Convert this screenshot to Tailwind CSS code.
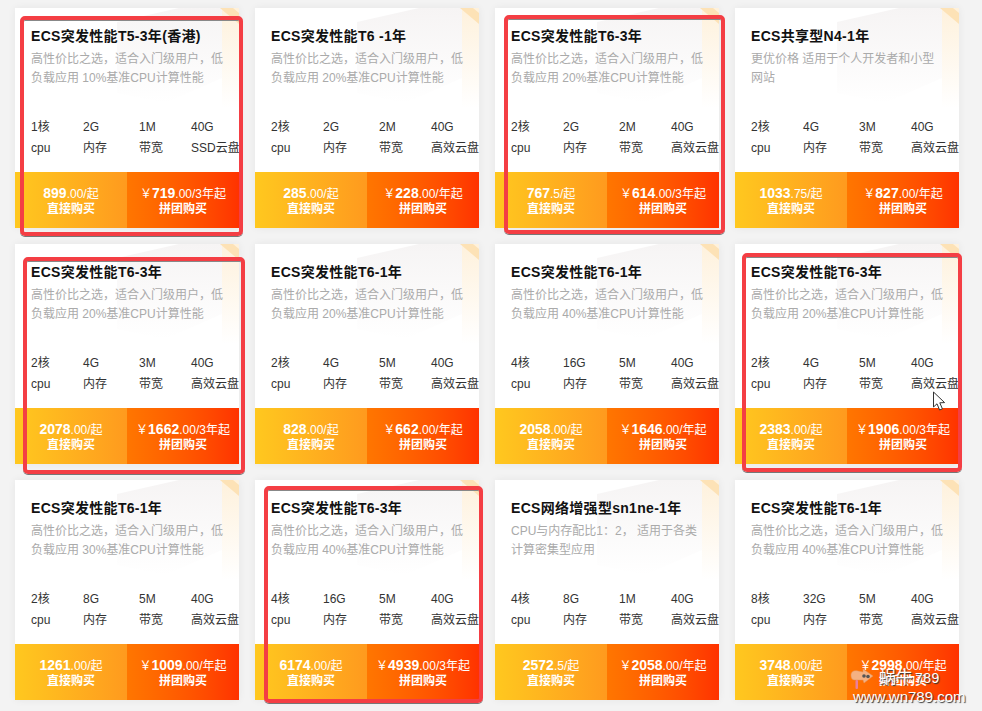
<!DOCTYPE html>
<html lang="zh-CN">

<head>
  <meta charset="UTF-8" />
  <meta name="viewport" content="width=device-width, initial-scale=1" />
  <title>ECS</title>
  <script src="https://cdn.jsdelivr.net/npm/@tailwindcss/browser@4"></script>
</head>

<body class="bg-[#f3f3f3] h-[711px] overflow-hidden relative font-[family-name:'Liberation_Sans','Noto_Sans_CJK_SC',sans-serif]">
  <svg class="absolute" width="0" height="0">
    <defs>
      <linearGradient id="stripe" x1="0" y1="0" x2="0" y2="1">
        <stop offset="0" stop-color="#fef1dc" />
        <stop offset="1" stop-color="#ffffff" />
      </linearGradient>
      <linearGradient id="slab" x1="0" y1="0" x2="0" y2="1">
        <stop offset="0" stop-color="#f6f4f4" />
        <stop offset="1" stop-color="#ffffff" />
      </linearGradient>
      <g id="deco">
        <polygon points="102,14 164,0 207,0 207,70 150,95 102,85" fill="url(#slab)" />
        <rect x="207" y="0" width="17" height="100" fill="url(#stripe)" />
        <polygon points="205,0 218,0 224,5 224,16" fill="#fde2b6" />
      </g>
    </defs>
  </svg>

  <div class="grid grid-cols-[repeat(4,224px)] auto-rows-[220px] gap-4 pl-[15px] pt-2">

    <!-- row 1 -->
    <div class="relative bg-white shadow-[0_0_8px_rgba(0,0,0,0.06)] flex flex-col">
      <svg class="absolute top-0 left-0" width="224" height="110"><use href="#deco" /></svg>
      <div class="relative px-4 pt-[18px]">
        <h3 class="text-sm font-bold leading-5 tracking-[0.3px] text-[#111]">ECS突发性能T5-3年(香港)</h3>
        <p class="mt-1 h-[38px] text-xs leading-[19px] text-[#aaa]">高性价比之选，适合入门级用户，低负载应用 10%基准CPU计算性能</p>
      </div>
      <div class="relative grid grid-cols-[52px_56px_52px_48px] pl-4 mt-[29px] text-xs leading-[21px] text-[#333] whitespace-nowrap">
        <div>1核<br />cpu</div><div>2G<br />内存</div><div>1M<br />带宽</div><div>40G<br />SSD云盘</div>
      </div>
      <div class="relative mt-auto h-14 grid grid-cols-2 text-xs leading-[15px] text-white text-center">
        <div class="flex flex-col justify-center pt-0.5 bg-linear-to-r from-[#ffc81f] to-[#ff9a1e]"><div><b class="text-[14px]">899</b>.00/起</div><div class="font-bold">直接购买</div></div>
        <div class="flex flex-col justify-center pt-0.5 bg-linear-to-r from-[#ff7600] to-[#ff3200]"><div>￥<b class="text-[14px]">719</b>.00/3年起</div><div class="font-bold">拼团购买</div></div>
      </div>
      <div class="absolute left-[5px] top-2 w-[223px] h-[220px] border-4 border-[#f43e44] rounded-[5px] shadow-[0_1px_0_#777,inset_0_1px_0_#888]"></div>
    </div>

    <div class="relative bg-white shadow-[0_0_8px_rgba(0,0,0,0.06)] flex flex-col">
      <svg class="absolute top-0 left-0" width="224" height="110"><use href="#deco" /></svg>
      <div class="relative px-4 pt-[18px]">
        <h3 class="text-sm font-bold leading-5 tracking-[0.3px] text-[#111]">ECS突发性能T6 -1年</h3>
        <p class="mt-1 h-[38px] text-xs leading-[19px] text-[#aaa]">高性价比之选，适合入门级用户，低负载应用 20%基准CPU计算性能</p>
      </div>
      <div class="relative grid grid-cols-[52px_56px_52px_48px] pl-4 mt-[29px] text-xs leading-[21px] text-[#333] whitespace-nowrap">
        <div>2核<br />cpu</div><div>2G<br />内存</div><div>2M<br />带宽</div><div>40G<br />高效云盘</div>
      </div>
      <div class="relative mt-auto h-14 grid grid-cols-2 text-xs leading-[15px] text-white text-center">
        <div class="flex flex-col justify-center pt-0.5 bg-linear-to-r from-[#ffc81f] to-[#ff9a1e]"><div><b class="text-[14px]">285</b>.00/起</div><div class="font-bold">直接购买</div></div>
        <div class="flex flex-col justify-center pt-0.5 bg-linear-to-r from-[#ff7600] to-[#ff3200]"><div>￥<b class="text-[14px]">228</b>.00/年起</div><div class="font-bold">拼团购买</div></div>
      </div>
    </div>

    <div class="relative bg-white shadow-[0_0_8px_rgba(0,0,0,0.06)] flex flex-col">
      <svg class="absolute top-0 left-0" width="224" height="110"><use href="#deco" /></svg>
      <div class="relative px-4 pt-[18px]">
        <h3 class="text-sm font-bold leading-5 tracking-[0.3px] text-[#111]">ECS突发性能T6-3年</h3>
        <p class="mt-1 h-[38px] text-xs leading-[19px] text-[#aaa]">高性价比之选，适合入门级用户，低负载应用 20%基准CPU计算性能</p>
      </div>
      <div class="relative grid grid-cols-[52px_56px_52px_48px] pl-4 mt-[29px] text-xs leading-[21px] text-[#333] whitespace-nowrap">
        <div>2核<br />cpu</div><div>2G<br />内存</div><div>2M<br />带宽</div><div>40G<br />高效云盘</div>
      </div>
      <div class="relative mt-auto h-14 grid grid-cols-2 text-xs leading-[15px] text-white text-center">
        <div class="flex flex-col justify-center pt-0.5 bg-linear-to-r from-[#ffc81f] to-[#ff9a1e]"><div><b class="text-[14px]">767</b>.5/起</div><div class="font-bold">直接购买</div></div>
        <div class="flex flex-col justify-center pt-0.5 bg-linear-to-r from-[#ff7600] to-[#ff3200]"><div>￥<b class="text-[14px]">614</b>.00/3年起</div><div class="font-bold">拼团购买</div></div>
      </div>
      <div class="absolute left-[9px] top-[7px] w-[221px] h-[219px] border-4 border-[#f43e44] rounded-[5px] shadow-[0_1px_0_#777,inset_0_1px_0_#888]"></div>
    </div>

    <div class="relative bg-white shadow-[0_0_8px_rgba(0,0,0,0.06)] flex flex-col">
      <svg class="absolute top-0 left-0" width="224" height="110"><use href="#deco" /></svg>
      <div class="relative px-4 pt-[18px]">
        <h3 class="text-sm font-bold leading-5 tracking-[0.3px] text-[#111]">ECS共享型N4-1年</h3>
        <p class="mt-1 h-[38px] text-xs leading-[19px] text-[#aaa]">更优价格 适用于个人开发者和小型网站</p>
      </div>
      <div class="relative grid grid-cols-[52px_56px_52px_48px] pl-4 mt-[29px] text-xs leading-[21px] text-[#333] whitespace-nowrap">
        <div>2核<br />cpu</div><div>4G<br />内存</div><div>3M<br />带宽</div><div>40G<br />高效云盘</div>
      </div>
      <div class="relative mt-auto h-14 grid grid-cols-2 text-xs leading-[15px] text-white text-center">
        <div class="flex flex-col justify-center pt-0.5 bg-linear-to-r from-[#ffc81f] to-[#ff9a1e]"><div><b class="text-[14px]">1033</b>.75/起</div><div class="font-bold">直接购买</div></div>
        <div class="flex flex-col justify-center pt-0.5 bg-linear-to-r from-[#ff7600] to-[#ff3200]"><div>￥<b class="text-[14px]">827</b>.00/年起</div><div class="font-bold">拼团购买</div></div>
      </div>
    </div>

    <!-- row 2 -->
    <div class="relative bg-white shadow-[0_0_8px_rgba(0,0,0,0.06)] flex flex-col">
      <svg class="absolute top-0 left-0" width="224" height="110"><use href="#deco" /></svg>
      <div class="relative px-4 pt-[18px]">
        <h3 class="text-sm font-bold leading-5 tracking-[0.3px] text-[#111]">ECS突发性能T6-3年</h3>
        <p class="mt-1 h-[38px] text-xs leading-[19px] text-[#aaa]">高性价比之选，适合入门级用户，低负载应用 20%基准CPU计算性能</p>
      </div>
      <div class="relative grid grid-cols-[52px_56px_52px_48px] pl-4 mt-[29px] text-xs leading-[21px] text-[#333] whitespace-nowrap">
        <div>2核<br />cpu</div><div>4G<br />内存</div><div>3M<br />带宽</div><div>40G<br />高效云盘</div>
      </div>
      <div class="relative mt-auto h-14 grid grid-cols-2 text-xs leading-[15px] text-white text-center">
        <div class="flex flex-col justify-center pt-0.5 bg-linear-to-r from-[#ffc81f] to-[#ff9a1e]"><div><b class="text-[14px]">2078</b>.00/起</div><div class="font-bold">直接购买</div></div>
        <div class="flex flex-col justify-center pt-0.5 bg-linear-to-r from-[#ff7600] to-[#ff3200]"><div>￥<b class="text-[14px]">1662</b>.00/3年起</div><div class="font-bold">拼团购买</div></div>
      </div>
      <div class="absolute left-2 top-[13px] w-[222px] h-[217px] border-4 border-[#f43e44] rounded-[5px] shadow-[0_1px_0_#777,inset_0_1px_0_#888]"></div>
    </div>

    <div class="relative bg-white shadow-[0_0_8px_rgba(0,0,0,0.06)] flex flex-col">
      <svg class="absolute top-0 left-0" width="224" height="110"><use href="#deco" /></svg>
      <div class="relative px-4 pt-[18px]">
        <h3 class="text-sm font-bold leading-5 tracking-[0.3px] text-[#111]">ECS突发性能T6-1年</h3>
        <p class="mt-1 h-[38px] text-xs leading-[19px] text-[#aaa]">高性价比之选，适合入门级用户，低负载应用 20%基准CPU计算性能</p>
      </div>
      <div class="relative grid grid-cols-[52px_56px_52px_48px] pl-4 mt-[29px] text-xs leading-[21px] text-[#333] whitespace-nowrap">
        <div>2核<br />cpu</div><div>4G<br />内存</div><div>5M<br />带宽</div><div>40G<br />高效云盘</div>
      </div>
      <div class="relative mt-auto h-14 grid grid-cols-2 text-xs leading-[15px] text-white text-center">
        <div class="flex flex-col justify-center pt-0.5 bg-linear-to-r from-[#ffc81f] to-[#ff9a1e]"><div><b class="text-[14px]">828</b>.00/起</div><div class="font-bold">直接购买</div></div>
        <div class="flex flex-col justify-center pt-0.5 bg-linear-to-r from-[#ff7600] to-[#ff3200]"><div>￥<b class="text-[14px]">662</b>.00/年起</div><div class="font-bold">拼团购买</div></div>
      </div>
    </div>

    <div class="relative bg-white shadow-[0_0_8px_rgba(0,0,0,0.06)] flex flex-col">
      <svg class="absolute top-0 left-0" width="224" height="110"><use href="#deco" /></svg>
      <div class="relative px-4 pt-[18px]">
        <h3 class="text-sm font-bold leading-5 tracking-[0.3px] text-[#111]">ECS突发性能T6-1年</h3>
        <p class="mt-1 h-[38px] text-xs leading-[19px] text-[#aaa]">高性价比之选，适合入门级用户，低负载应用 40%基准CPU计算性能</p>
      </div>
      <div class="relative grid grid-cols-[52px_56px_52px_48px] pl-4 mt-[29px] text-xs leading-[21px] text-[#333] whitespace-nowrap">
        <div>4核<br />cpu</div><div>16G<br />内存</div><div>5M<br />带宽</div><div>40G<br />高效云盘</div>
      </div>
      <div class="relative mt-auto h-14 grid grid-cols-2 text-xs leading-[15px] text-white text-center">
        <div class="flex flex-col justify-center pt-0.5 bg-linear-to-r from-[#ffc81f] to-[#ff9a1e]"><div><b class="text-[14px]">2058</b>.00/起</div><div class="font-bold">直接购买</div></div>
        <div class="flex flex-col justify-center pt-0.5 bg-linear-to-r from-[#ff7600] to-[#ff3200]"><div>￥<b class="text-[14px]">1646</b>.00/年起</div><div class="font-bold">拼团购买</div></div>
      </div>
    </div>

    <div class="relative bg-white shadow-[0_0_8px_rgba(0,0,0,0.06)] flex flex-col">
      <svg class="absolute top-0 left-0" width="224" height="110"><use href="#deco" /></svg>
      <div class="relative px-4 pt-[18px]">
        <h3 class="text-sm font-bold leading-5 tracking-[0.3px] text-[#111]">ECS突发性能T6-3年</h3>
        <p class="mt-1 h-[38px] text-xs leading-[19px] text-[#aaa]">高性价比之选，适合入门级用户，低负载应用 20%基准CPU计算性能</p>
      </div>
      <div class="relative grid grid-cols-[52px_56px_52px_48px] pl-4 mt-[29px] text-xs leading-[21px] text-[#333] whitespace-nowrap">
        <div>2核<br />cpu</div><div>4G<br />内存</div><div>5M<br />带宽</div><div>40G<br />高效云盘</div>
      </div>
      <div class="relative mt-auto h-14 grid grid-cols-2 text-xs leading-[15px] text-white text-center">
        <div class="flex flex-col justify-center pt-0.5 bg-linear-to-r from-[#ffc81f] to-[#ff9a1e]"><div><b class="text-[14px]">2383</b>.00/起</div><div class="font-bold">直接购买</div></div>
        <div class="flex flex-col justify-center pt-0.5 bg-linear-to-r from-[#ff7600] to-[#ff3200]"><div>￥<b class="text-[14px]">1906</b>.00/3年起</div><div class="font-bold">拼团购买</div></div>
      </div>
      <div class="absolute left-[7px] top-[9px] w-[220px] h-[219px] border-4 border-[#f43e44] rounded-[5px] shadow-[0_1px_0_#777,inset_0_1px_0_#888]"></div>
      <!-- mouse cursor -->
      <svg class="absolute left-[197px] top-[147px]" width="15" height="21" viewBox="0 0 15 21">
        <path d="M1.5 1 L1.5 16 L5 12.8 L7.6 19 L10.4 17.8 L7.8 11.8 L12.6 11.6 Z" fill="#fff" stroke="#333" stroke-width="1" stroke-linejoin="round" />
      </svg>
    </div>

    <!-- row 3 -->
    <div class="relative bg-white shadow-[0_0_8px_rgba(0,0,0,0.06)] flex flex-col">
      <svg class="absolute top-0 left-0" width="224" height="110"><use href="#deco" /></svg>
      <div class="relative px-4 pt-[18px]">
        <h3 class="text-sm font-bold leading-5 tracking-[0.3px] text-[#111]">ECS突发性能T6-1年</h3>
        <p class="mt-1 h-[38px] text-xs leading-[19px] text-[#aaa]">高性价比之选，适合入门级用户，低负载应用 30%基准CPU计算性能</p>
      </div>
      <div class="relative grid grid-cols-[52px_56px_52px_48px] pl-4 mt-[29px] text-xs leading-[21px] text-[#333] whitespace-nowrap">
        <div>2核<br />cpu</div><div>8G<br />内存</div><div>5M<br />带宽</div><div>40G<br />高效云盘</div>
      </div>
      <div class="relative mt-auto h-14 grid grid-cols-2 text-xs leading-[15px] text-white text-center">
        <div class="flex flex-col justify-center pt-0.5 bg-linear-to-r from-[#ffc81f] to-[#ff9a1e]"><div><b class="text-[14px]">1261</b>.00/起</div><div class="font-bold">直接购买</div></div>
        <div class="flex flex-col justify-center pt-0.5 bg-linear-to-r from-[#ff7600] to-[#ff3200]"><div>￥<b class="text-[14px]">1009</b>.00/年起</div><div class="font-bold">拼团购买</div></div>
      </div>
    </div>

    <div class="relative bg-white shadow-[0_0_8px_rgba(0,0,0,0.06)] flex flex-col">
      <svg class="absolute top-0 left-0" width="224" height="110"><use href="#deco" /></svg>
      <div class="relative px-4 pt-[18px]">
        <h3 class="text-sm font-bold leading-5 tracking-[0.3px] text-[#111]">ECS突发性能T6-3年</h3>
        <p class="mt-1 h-[38px] text-xs leading-[19px] text-[#aaa]">高性价比之选，适合入门级用户，低负载应用 40%基准CPU计算性能</p>
      </div>
      <div class="relative grid grid-cols-[52px_56px_52px_48px] pl-4 mt-[29px] text-xs leading-[21px] text-[#333] whitespace-nowrap">
        <div>4核<br />cpu</div><div>16G<br />内存</div><div>5M<br />带宽</div><div>40G<br />高效云盘</div>
      </div>
      <div class="relative mt-auto h-14 grid grid-cols-2 text-xs leading-[15px] text-white text-center">
        <div class="flex flex-col justify-center pt-0.5 bg-linear-to-r from-[#ffc81f] to-[#ff9a1e]"><div><b class="text-[14px]">6174</b>.00/起</div><div class="font-bold">直接购买</div></div>
        <div class="flex flex-col justify-center pt-0.5 bg-linear-to-r from-[#ff7600] to-[#ff3200]"><div>￥<b class="text-[14px]">4939</b>.00/3年起</div><div class="font-bold">拼团购买</div></div>
      </div>
      <div class="absolute left-[9px] top-1.5 w-[219px] h-[217px] border-4 border-[#f43e44] rounded-[5px] shadow-[0_1px_0_#777,inset_0_1px_0_#888]"></div>
    </div>

    <div class="relative bg-white shadow-[0_0_8px_rgba(0,0,0,0.06)] flex flex-col">
      <svg class="absolute top-0 left-0" width="224" height="110"><use href="#deco" /></svg>
      <div class="relative px-4 pt-[18px]">
        <h3 class="text-sm font-bold leading-5 tracking-[0.3px] text-[#111]">ECS网络增强型sn1ne-1年</h3>
        <p class="mt-1 h-[38px] text-xs leading-[19px] text-[#aaa]">CPU与内存配比1：2， 适用于各类计算密集型应用</p>
      </div>
      <div class="relative grid grid-cols-[52px_56px_52px_48px] pl-4 mt-[29px] text-xs leading-[21px] text-[#333] whitespace-nowrap">
        <div>4核<br />cpu</div><div>8G<br />内存</div><div>1M<br />带宽</div><div>40G<br />高效云盘</div>
      </div>
      <div class="relative mt-auto h-14 grid grid-cols-2 text-xs leading-[15px] text-white text-center">
        <div class="flex flex-col justify-center pt-0.5 bg-linear-to-r from-[#ffc81f] to-[#ff9a1e]"><div><b class="text-[14px]">2572</b>.5/起</div><div class="font-bold">直接购买</div></div>
        <div class="flex flex-col justify-center pt-0.5 bg-linear-to-r from-[#ff7600] to-[#ff3200]"><div>￥<b class="text-[14px]">2058</b>.00/年起</div><div class="font-bold">拼团购买</div></div>
      </div>
    </div>

    <div class="relative bg-white shadow-[0_0_8px_rgba(0,0,0,0.06)] flex flex-col">
      <svg class="absolute top-0 left-0" width="224" height="110"><use href="#deco" /></svg>
      <div class="relative px-4 pt-[18px]">
        <h3 class="text-sm font-bold leading-5 tracking-[0.3px] text-[#111]">ECS突发性能T6-1年</h3>
        <p class="mt-1 h-[38px] text-xs leading-[19px] text-[#aaa]">高性价比之选，适合入门级用户，低负载应用 40%基准CPU计算性能</p>
      </div>
      <div class="relative grid grid-cols-[52px_56px_52px_48px] pl-4 mt-[29px] text-xs leading-[21px] text-[#333] whitespace-nowrap">
        <div>8核<br />cpu</div><div>32G<br />内存</div><div>5M<br />带宽</div><div>40G<br />高效云盘</div>
      </div>
      <div class="relative mt-auto h-14 grid grid-cols-2 text-xs leading-[15px] text-white text-center">
        <div class="flex flex-col justify-center pt-0.5 bg-linear-to-r from-[#ffc81f] to-[#ff9a1e]"><div><b class="text-[14px]">3748</b>.00/起</div><div class="font-bold">直接购买</div></div>
        <div class="flex flex-col justify-center pt-0.5 bg-linear-to-r from-[#ff7600] to-[#ff3200]"><div>￥<b class="text-[14px]">2998</b>.00/年起</div><div class="font-bold">拼团购买</div></div>
      </div>
    </div>
  </div>

  <!-- watermark over the last card -->
  <svg class="absolute left-[849px] top-[667px]" width="32" height="26" viewBox="0 0 32 26">
    <path d="M2 8 C2 4 6 3 9 4 L14 5 L14 2 L24 9 L15 16 L14 13 L6 13 C3 13 2 11 2 8 Z" fill="#f4b183" stroke="#e2955f" stroke-width="0.5" />
    <circle cx="15" cy="9" r="1.8" fill="#555" />
    <circle cx="19" cy="9.5" r="1.8" fill="#555" />
    <rect x="6.5" y="13" width="2.5" height="9" rx="1" fill="#ea7f9c" />
  </svg>
  <div class="absolute left-[879px] top-[666px] text-[17px] leading-6 text-white [text-shadow:1px_1px_1px_#333] whitespace-nowrap">蜗牛<span class="ml-0.5 text-sm tracking-[0.5px]">789</span></div>
  <div class="absolute left-[853px] top-[688px] text-[15px] leading-[18px] text-white [text-shadow:1px_1px_1px_#333] whitespace-nowrap">www.wn789.com</div>
</body>

</html>
